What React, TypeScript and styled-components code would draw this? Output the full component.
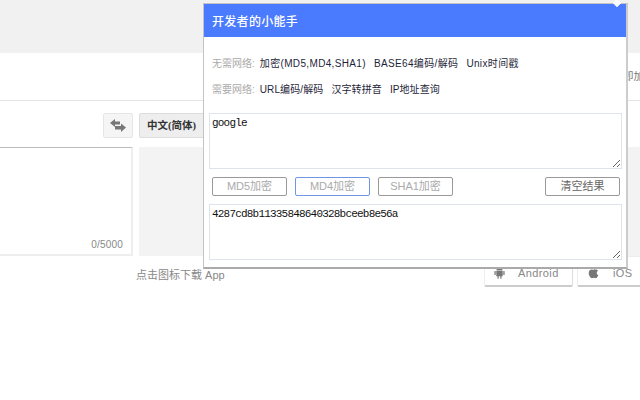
import styled, { createGlobalStyle } from "styled-components";
import { FaApple } from "react-icons/fa";

const GlobalStyle = createGlobalStyle`
  html, body { margin: 0; padding: 0; background: #fff; }
  body { width: 640px; height: 400px; overflow: hidden; font-family: "Liberation Sans", "Noto Sans CJK SC", sans-serif; }
`;

const Page = styled.div`
  position: relative;
  width: 640px;
  height: 400px;
  overflow: hidden;
`;

const TopBand = styled.div`
  height: 53px;
  background: #f1f1f1;
`;

const NavBar = styled.div`
  height: 44px;
  padding-bottom: 3px;
  border-bottom: 1px solid #e5e5e5;
  display: flex;
  align-items: center;
  font-size: 10.5px;
  color: #777;
  padding-left: 623px;
  white-space: nowrap;
  overflow: hidden;
`;

const Toolbar = styled.div`
  display: flex;
  gap: 6px;
  padding: 12px 0 0 103px;
  height: 25px;
`;

const SwapButton = styled.div`
  width: 28px;
  height: 23px;
  border: 1px solid #e6e6e6;
  border-radius: 2px;
  background: #f5f5f5;
  display: flex;
  align-items: center;
  justify-content: center;
`;

const LangButton = styled.div`
  width: 90px;
  height: 23px;
  border: 1px solid #dcdcdc;
  border-radius: 2px;
  background: #eee;
  font-size: 10.5px;
  font-weight: 700;
  color: #333;
  font-family: "Liberation Serif", "Noto Sans CJK SC", serif;
  line-height: 23px;
  padding-left: 7px;
`;

const Panels = styled.div`
  display: grid;
  grid-template-columns: 133px 1fr;
  gap: 6px;
  margin-top: 9px;
  height: 109px;
`;

const SourcePanel = styled.div`
  border: 2px solid #eee;
  border-left: none;
  border-top: 1px solid #bbb;
  display: flex;
  justify-content: flex-end;
  align-items: flex-end;
  font-size: 10px;
  color: #888;
  padding: 0 8px 4px 0;
  letter-spacing: 0.2px;
`;

const ResultPanel = styled.div`
  background: #f3f3f3;
`;

const Footer = styled.div`
  display: flex;
  align-items: flex-start;
  padding-left: 136px;
  height: 32px;
`;

const FooterText = styled.span`
  flex: none;
  font-size: 11px;
  color: #888;
  margin-top: 10px;
  width: 348px;
  white-space: nowrap;
`;

const StoreButton = styled.div<{ $width: number }>`
  flex: none;
  width: ${(p) => p.$width}px;
  height: 31px;
  margin-right: 4px;
  box-sizing: border-box;
  border: 1px solid #eee;
  border-bottom: 2px solid #ccc;
  border-right: 1px solid #ddd;
  border-radius: 2px;
  display: flex;
  align-items: flex-end;
  padding: 0 0 6px 9px;
  gap: 13px;
  font-size: 11px;
  color: #888;
  letter-spacing: 0.4px;
  svg { color: #777; margin-bottom: 0; }
`;

const Popup = styled.div`
  position: absolute;
  left: 203px;
  top: 3px;
  width: 425px;
  height: 266px;
  box-sizing: border-box;
  background: #fff;
  border: 1px solid #c4c4c4;
  border-bottom: 2px solid #aaa;
  border-right: 2px solid #ccc;
`;

const PopupCaret = styled.div`
  position: absolute;
  top: -4px;
  right: 6px;
  width: 6px;
  height: 6px;
  background: #fff;
  transform: rotate(45deg);
`;

const PopupHeader = styled.div`
  height: 33px;
  background: #4a7afd;
  color: #fff;
  font-size: 12px;
  font-weight: 500;
  line-height: 33px;
  padding-left: 8px;
  letter-spacing: 0.3px;
  font-family: "Noto Sans CJK SC", sans-serif;
`;

const LinkRows = styled.div`
  padding: 18px 0 0 8px;
  display: flex;
  flex-direction: column;
  gap: 11px;
  height: 58px;
  box-sizing: border-box;
  margin-bottom: 18px;
`;

const LinkRow = styled.div<{ $spacing: number }>`
  display: flex;
  align-items: center;
  height: 16px;
  font-size: 10px;
  letter-spacing: ${(p) => p.$spacing}px;
  font-family: "Liberation Sans", "Noto Sans CJK SC", sans-serif;
  white-space: nowrap;
`;

const RowLabel = styled.span`
  color: #aaa;
  letter-spacing: 0;
  margin-right: 5px;
`;

const ToolLink = styled.span`
  color: #1f1f3a;
  margin-right: 8px;
`;

const Field = styled.textarea`
  display: block;
  box-sizing: border-box;
  width: 413px;
  height: 56px;
  margin-left: 5px;
  padding: 3px 2px;
  border: 1px solid #dfe3ea;
  outline: none;
  font-family: "Liberation Mono", monospace;
  font-size: 11px;
  letter-spacing: -0.8px;
  color: #111;
  resize: both;
`;

const ButtonRow = styled.div`
  display: flex;
  gap: 8px;
  padding: 8px 0 8px 8px;
  width: 416px;
  box-sizing: border-box;
`;

const ActionButton = styled.div<{ $active?: boolean; $dark?: boolean }>`
  width: 75px;
  height: 19px;
  box-sizing: border-box;
  border: 1px solid ${(p) => (p.$active ? "#6f96e0" : "#999")};
  border-radius: 2px;
  font-size: 11px;
  line-height: 17px;
  text-align: center;
  color: ${(p) => (p.$dark ? "#666" : "#aaa")};
  font-family: "Liberation Sans", "Noto Sans CJK SC", sans-serif;
  margin-left: ${(p) => (p.$dark ? "auto" : "0")};
`;

const SwapIcon = () => (
  <svg width="16" height="13" viewBox="0 0 16 13" fill="#777">
    <path d="M0 4 L5 0 V2.5 H10 V5.5 H5 V8 Z" />
    <path d="M16 8.5 L11 13 V10.5 H5 V7 H11 V4.5 Z" />
  </svg>
);

const AndroidIcon = () => (
  <svg width="11" height="12" viewBox="0 0 11 12" fill="#777">
    <path d="M2.3 3.4 C2.4 1.9 3.7 0.9 5.5 0.9 C7.3 0.9 8.6 1.9 8.7 3.4 Z" />
    <path d="M2.3 3.9 H8.7 V9.2 H7.5 V11.2 A0.6 0.6 0 0 1 6.3 11.2 V9.2 H4.7 V11.2 A0.6 0.6 0 0 1 3.5 11.2 V9.2 H2.3 Z" />
    <rect x="0.4" y="3.9" width="1.3" height="4.2" rx="0.65" />
    <rect x="9.3" y="3.9" width="1.3" height="4.2" rx="0.65" />
  </svg>
);

export default function App() {
  return (
    <Page>
      <GlobalStyle />
      <TopBand />
      <NavBar>即加</NavBar>
      <Toolbar>
        <SwapButton>
          <SwapIcon />
        </SwapButton>
        <LangButton>中文(简体)</LangButton>
      </Toolbar>
      <Panels>
        <SourcePanel>0/5000</SourcePanel>
        <ResultPanel />
      </Panels>
      <Footer>
        <FooterText>点击图标下载 App</FooterText>
        <StoreButton $width={89}>
          <AndroidIcon />
          Android
        </StoreButton>
        <StoreButton $width={80}>
          <FaApple size={13} />
          iOS
        </StoreButton>
      </Footer>
      <Popup>
        <PopupCaret />
        <PopupHeader>开发者的小能手</PopupHeader>
        <LinkRows>
          <LinkRow $spacing={0.35}>
            <RowLabel>无需网络:</RowLabel>
            <ToolLink>加密(MD5,MD4,SHA1)</ToolLink>
            <ToolLink>BASE64编码/解码</ToolLink>
            <ToolLink>Unix时间戳</ToolLink>
          </LinkRow>
          <LinkRow $spacing={0.1}>
            <RowLabel>需要网络:</RowLabel>
            <ToolLink>URL编码/解码</ToolLink>
            <ToolLink>汉字转拼音</ToolLink>
            <ToolLink>IP地址查询</ToolLink>
          </LinkRow>
        </LinkRows>
        <Field defaultValue="google" />
        <ButtonRow>
          <ActionButton>MD5加密</ActionButton>
          <ActionButton $active>MD4加密</ActionButton>
          <ActionButton>SHA1加密</ActionButton>
          <ActionButton $dark>清空结果</ActionButton>
        </ButtonRow>
        <Field defaultValue="4287cd8b11335848640328bceeb8e56a" />
      </Popup>
    </Page>
  );
}
